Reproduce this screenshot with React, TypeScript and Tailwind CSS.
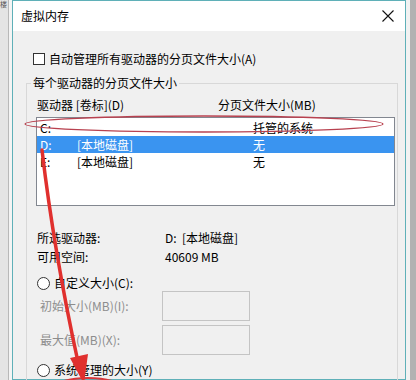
import React from 'react';

const rows = [
  { drive: 'C:', label: '', size: '托管的系统', selected: false },
  { drive: 'D:', label: '[本地磁盘]', size: '无', selected: true },
  { drive: 'E:', label: '[本地磁盘]', size: '无', selected: false },
];

function Radio({ text }: { text: string }) {
  return (
    <div className="flex items-center h-[16px] gap-[4px]">
      <span className="w-[13px] h-[13px] rounded-full border border-[#333] bg-white" />
      <span>{text}</span>
    </div>
  );
}

function SizeInput({ label }: { label: string }) {
  return (
    <div className="flex items-center">
      <span className="w-[125px] pl-[3px] text-[#8d8d8d]">{label}</span>
      <div className="w-[88px] h-[30px] border border-[#c4c4c4] bg-[#f0f0f0]" />
    </div>
  );
}

export default function App() {
  return (
    <div className="relative w-[416px] h-[380px] overflow-hidden flex bg-[#e6e6e6] font-['Noto_Sans_CJK_SC','Noto_Sans',sans-serif] text-[12px] leading-[16px] text-black">
      {/* window behind, left edge */}
      <div className="w-[12px] shrink-0 flex">
        <div className="w-[8px] bg-[#e4e4e4] text-[7px] leading-[9px] text-[#555]">楼</div>
        <div className="w-[1px] bg-[#b8b8b8]" />
        <div className="w-[3px] bg-[#f4f4f4]" />
      </div>

      {/* dialog */}
      <div className="w-[394px] shrink-0 border border-[#5fb0b8] bg-[#f0f0f0] flex flex-col">
        <div className="h-[30px] shrink-0 bg-white flex items-center justify-between pl-[8px] pr-[11px]">
          <span>虚拟内存</span>
          <svg width="12" height="12" viewBox="0 0 12 12">
            <path d="M0.5 0.5 L11.5 11.5 M11.5 0.5 L0.5 11.5" stroke="#111" strokeWidth="1.1" />
          </svg>
        </div>

        <div className="mt-[20px] pl-[20px] flex items-center gap-[4px] h-[16px] shrink-0">
          <span className="w-[12px] h-[12px] border border-[#333] bg-white" />
          <span>自动管理所有驱动器的分页文件大小(A)</span>
        </div>

        <fieldset className="mt-[8px] ml-[13px] w-[372px] shrink-0 border border-[#d8d8d8] pb-[20px]">
          <legend className="ml-[4px] px-[2px] leading-[16px]">每个驱动器的分页文件大小</legend>

          <div className="mt-[6px] pl-[10px] flex h-[16px]">
            <span className="w-[181px]">驱动器 [卷标](D)</span>
            <span>分页文件大小(MB)</span>
          </div>

          <div className="mt-[4px] ml-[9px] w-[359px] h-[89px] border border-[#828790] bg-white pt-[1px]">
            {rows.map((r) => (
              <div
                key={r.drive}
                className={`flex items-center h-[17px] pl-[3px] ${r.selected ? 'bg-[#3a94f0] text-white' : ''}`}
              >
                <span className="w-[37px]">{r.drive}</span>
                <span className="w-[176px]">{r.label}</span>
                <span>{r.size}</span>
              </div>
            ))}
          </div>

          <div className="mt-[22px] pl-[10px] leading-[19px]">
            <div className="flex">
              <span className="w-[128px]">所选驱动器:</span>
              <span>D:&nbsp;&nbsp;[本地磁盘]</span>
            </div>
            <div className="flex">
              <span className="w-[128px]">可用空间:</span>
              <span>40609 MB</span>
            </div>
          </div>

          <div className="mt-[9px] pl-[10px]">
            <Radio text="自定义大小(C):" />
          </div>

          <div className="pl-[10px] flex flex-col gap-[4px]">
            <SizeInput label="初始大小(MB)(I):" />
            <SizeInput label="最大值(MB)(X):" />
          </div>

          <div className="mt-[7px] pl-[10px]">
            <Radio text="系统管理的大小(Y)" />
          </div>
        </fieldset>
      </div>

      {/* window behind, right edge */}
      <div className="flex-1 flex">
        <div className="w-[4px] bg-[#f2f2f2]" />
        <div className="flex-1 bg-[#b2b2b2]" />
      </div>

      {/* red annotations */}
      <svg className="absolute inset-0 pointer-events-none" width="416" height="380" viewBox="0 0 416 380">
        <ellipse cx="204" cy="124" rx="179" ry="8" fill="none" stroke="#b8414f" strokeWidth="1.3" />
        <ellipse cx="88" cy="393" rx="40" ry="15" fill="none" stroke="#d9363a" strokeWidth="2" />
        <path d="M42 150 Q 54 252 78 362" fill="none" stroke="#e0302e" strokeWidth="3.5" strokeLinecap="round" />
        <path d="M70 358 L84 384 L88 354 Z" fill="#e0302e" />
      </svg>
    </div>
  );
}
